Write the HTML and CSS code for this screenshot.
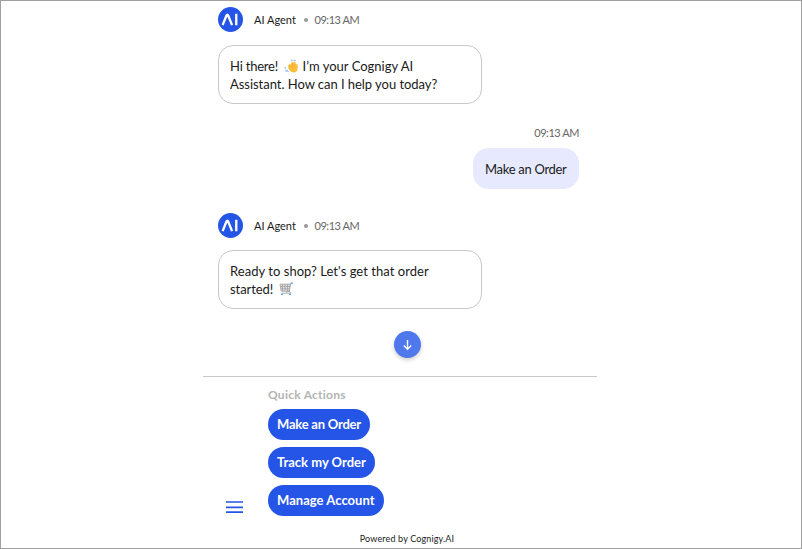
FILE: index.html
```
<!DOCTYPE html>
<html lang="en">
<head>
<meta charset="utf-8">
<title>AI Agent chat</title>
<link rel="stylesheet" href="styles.css">
</head>
<body>
<svg class="defs" aria-hidden="true">
  <symbol id="logo" viewBox="0 0 26 26">
    <circle cx="13" cy="13" r="13" fill="#2455e6"/>
    <path d="M4.8 18.9 8.8 8.9q.9-2 1.8 0l4 10M19 7v11.9" fill="none" stroke="#fff" stroke-width="2.4"/>
  </symbol>
</svg>
<main class="window">
  <section class="chat">
    <header class="meta">
      <svg class="avatar"><use href="#logo"/></svg>
      <span class="name">AI Agent</span><i class="dot"></i><time>09:13 AM</time>
    </header>
    <div class="bubble">
      <p><span class="t-hi">Hi there!</span><svg class="emoji wave" viewBox="0 0 14 14"><path d="M4.3 6.2 6 4.8l1.3 1.4L7 3.6l1.5-.6L9.6 4l.2-1.4 1.4.2.8 3 .9-.9.9.9-.2 4.2c-.3 2.2-1.6 3.5-3.8 3.5-2 0-3.5-1.1-4.7-3L4.2 8.4z" fill="#fcbc3c"/><path d="m5.6 6.6 2.5 2.6M7.4 5.2l1.9 2.8M9.4 4.4l1.1 2.6" stroke="#f2a52c" stroke-width=".6"/><path d="M7 1.8 8.6.9M10 1l1.6 1M.7 8l1 1.8M2.6 11l1.8 1.8M1.4 11.4l1 1.2" stroke="#8eb8ed" stroke-width="1.1"/></svg><span class="t-im">I’m your Cognigy AI</span></p>
      <p class="t-assist">Assistant. How can I help you today?</p>
    </div>
    <time class="user-time">09:13 AM</time>
    <div class="bubble user"><p class="t-make">Make an Order</p></div>
    <header class="meta second">
      <svg class="avatar"><use href="#logo"/></svg>
      <span class="name">AI Agent</span><i class="dot"></i><time>09:13 AM</time>
    </header>
    <div class="bubble">
      <p class="t-ready">Ready to shop? Let's get that order</p>
      <p><span class="t-started">started!</span><svg class="emoji cart" viewBox="0 0 14 14"><path d="M1 2.2h10.2l-1 7H2.2z" fill="#e1e1e1" stroke="#aaa"/><path d="M3.5 2.2v7M6 2.2v7M8.5 2.2v7M1.5 4.5h9M2 6.8h8.5M13 1.2h-1.5L10.3 9l1.3 2.2H3M7 10.5l4-2" fill="none" stroke="#a5a5a5" stroke-width=".9"/><path d="M2 12.2h1.8M10 12.2h1.8M12.2 1.1h1.5" stroke="#62a9dc" stroke-width="1.6"/></svg></p>
    </div>
    <button class="down" aria-label="Scroll down"><svg viewBox="0 0 27 27"><path d="M13.5 9v9M9.8 14.5l3.7 3.7 3.7-3.7" fill="none" stroke="#fff" stroke-width="1.4"/></svg></button>
  </section>
  <section class="actions">
    <svg class="menu" viewBox="0 0 17 12"><path d="M0 1h17M0 6.3h17M0 11.2h17" stroke="#2455e6" stroke-width="1.7"/></svg>
    <div class="list">
      <h2>Quick Actions</h2>
      <button class="b-make">Make an Order</button>
      <button class="b-track">Track my Order</button>
      <button class="b-manage">Manage Account</button>
    </div>
  </section>
  <footer><span>Powered by Cognigy.AI</span></footer>
</main>
</body>
</html>
```
FILE: styles.css
```
* { box-sizing: border-box; }
body { margin: 0; background: #fff; color: #1a1a1a; font: 13px/18px Lato, sans-serif; }
p, h2 { margin: 0; white-space: nowrap; }
button { border: 0; padding: 0; font: inherit; color: #fff; }
.defs { position: absolute; width: 0; height: 0; }
.window { height: 549px; border: 1px solid #a0a0a0; display: flex; flex-direction: column; align-items: center; }
.chat { width: 394px; height: 375px; margin-left: -2px; padding: 6px 18px 0 15px; display: flex; flex-direction: column; align-items: flex-start; }
.meta { display: flex; align-items: center; height: 25px; margin-bottom: 13px; font-size: 11px; }
.avatar { width: 25px; height: 25px; margin-right: 11px; }
.name { width: 43px; }
.dot { width: 4px; height: 4px; border-radius: 50%; background: #999; margin: 0 7px 0 6.5px; }
time { color: #666; font-size: 11px; letter-spacing: -.45px; }
.bubble { width: 264px; height: 59px; border: 1px solid #c8c8c8; border-radius: 15px; padding: 10.5px 11px; }
.bubble p { display: flex; height: 18px; }
.t-hi { letter-spacing: -.2px; }
.t-assist { letter-spacing: -.04px; }
.t-make { letter-spacing: -.3px; }
.t-ready { letter-spacing: .04px; }
.t-started { letter-spacing: -.06px; }
.emoji { width: 14px; height: 14px; margin: 2px 5px 0 5.5px; }
.user-time { align-self: flex-end; margin-top: 20px; }
.bubble.user { align-self: flex-end; width: 106px; height: 41px; margin-top: 6px; border-color: #e7eaff; background: #e7eaff; }
.second { margin-top: 24px; margin-bottom: 12px; }
.down { width: 27px; height: 27px; border-radius: 50%; background: #4f78ec; box-shadow: 0 2px 4px #0003; align-self: center; margin: 22px 0 0 17px; }
.down svg { display: block; width: 27px; height: 27px; }
.actions { width: 394px; margin-left: -2px; height: 154px; border-top: 1px solid #c8c8c8; display: flex; align-items: flex-end; padding: 0 0 14px 23px; }
.menu { width: 17px; height: 12px; margin: 0 25px 3px 0; }
.list { display: flex; flex-direction: column; align-items: flex-start; gap: 7px; }
.list h2 { font-size: 12px; line-height: 16px; margin-bottom: -1px; font-weight: 700; letter-spacing: .25px; color: #b3b3b3; }
.list button { height: 31px; border-radius: 15.5px; padding: 0 9px 1px; background: #2455e6; font-weight: 700; text-align: left; white-space: nowrap; }
.list .b-make { width: 102px; letter-spacing: -.22px; }
.b-track { width: 107px; }
.b-manage { width: 116px; letter-spacing: .04px; }
footer { font-size: 9px; line-height: 12px; letter-spacing: .15px; margin-top: 3px; margin-left: 12px; }
```
